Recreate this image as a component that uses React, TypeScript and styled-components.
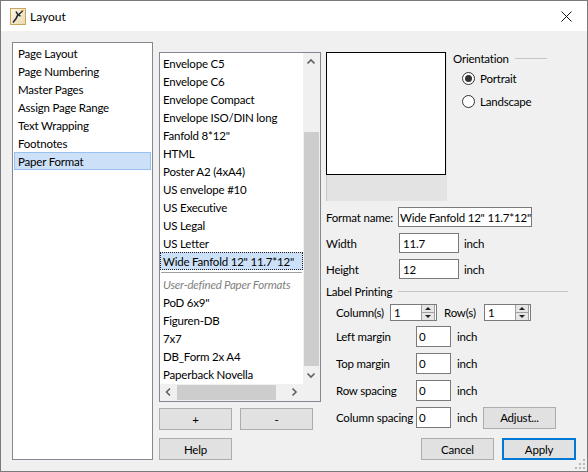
import React from 'react';
import styled, { createGlobalStyle } from 'styled-components';

const FONT = `"Lato", "Liberation Sans", sans-serif`;

const Global = createGlobalStyle`
  html, body { margin: 0; padding: 0; background: #ffffff; }
  body { font-family: ${FONT}; font-size: 11.5px; letter-spacing: -0.2px; color: #000; }
  * { box-sizing: border-box; }
`;

const Window = styled.div`
  position: relative;
  width: 588px;
  height: 472px;
  border: 1px solid #7a7a7a;
  background: #f0f0f0;
  display: flex;
  flex-direction: column;
  overflow: hidden;
`;

const TitleBar = styled.div`
  flex: none;
  height: 30px;
  background: #ffffff;
  display: flex;
  align-items: center;
  padding-left: 9px;
  gap: 4px;
`;

const TitleText = styled.span`
  flex: 1;
  font-size: 12px;
  letter-spacing: 0;
  padding-top: 1px;
`;

const CloseBox = styled.div`
  width: 46px;
  height: 30px;
  display: flex;
  align-items: center;
  justify-content: center;
  margin-right: -2px;
`;

const Body = styled.div`
  flex: 1;
  display: flex;
  gap: 6px;
  padding: 11px 11px 11px 11px;
  min-height: 0;
`;

const Box = styled.div`
  background: #ffffff;
  border: 1px solid #828790;
`;

const NavList = styled(Box)`
  flex: none;
  width: 141px;
  padding: 1px;
  display: flex;
  flex-direction: column;
`;

const Item = styled.div<{ $selected?: boolean; $focus?: boolean; $muted?: boolean; $pad: number }>`
  flex: none;
  height: 18px;
  line-height: 16px;
  padding-top: 1px;
  padding-left: ${(p) => p.$pad}px;
  white-space: nowrap;
  border: 1px ${(p) => (p.$focus ? 'dotted' : 'solid')}
    ${(p) => (p.$focus ? '#222' : p.$selected ? '#99c1ef' : 'transparent')};
  background: ${(p) => (p.$selected ? '#cce0f8' : 'transparent')};
  color: ${(p) => (p.$muted ? '#7f7f7f' : '#000')};
  font-style: ${(p) => (p.$muted ? 'italic' : 'normal')};
`;

const Separator = styled.div`
  flex: none;
  height: 5px;
  display: flex;
  align-items: center;
  padding: 0 1px;
  &::after {
    content: '';
    flex: 1;
    height: 1px;
    background: #a0a0a0;
  }
`;

const RightPane = styled.div`
  flex: 1;
  display: flex;
  flex-direction: column;
  padding-top: 10px;
`;

const Main = styled.div`
  flex: 1;
  display: flex;
  gap: 5px;
`;

const MiddleCol = styled.div`
  flex: none;
  width: 162px;
  display: flex;
  flex-direction: column;
  gap: 6px;
`;

const FormatList = styled(Box)`
  height: 350px;
  display: grid;
  grid-template-columns: 1fr 17px;
  grid-template-rows: 1fr 17px;
  overflow: hidden;
`;

const ListContent = styled.div`
  padding-top: 1px;
  display: flex;
  flex-direction: column;
  overflow: hidden;
`;

const VScroll = styled.div`
  background: #f0f0f0;
  display: flex;
  flex-direction: column;
`;

const HScroll = styled.div`
  background: #f0f0f0;
  display: flex;
`;

const Corner = styled.div`
  background: #f0f0f0;
`;

const ArrowBtn = styled.div`
  flex: none;
  width: 17px;
  height: 17px;
  display: flex;
  align-items: center;
  justify-content: center;
`;

const VTrack = styled.div`
  flex: 1;
  padding: 0 1px;
`;

const HTrack = styled.div`
  flex: 1;
  padding: 1px 0;
`;

const VThumb = styled.div<{ $offset: number; $size: number }>`
  margin-top: ${(p) => p.$offset}px;
  height: ${(p) => p.$size}px;
  background: #cdcdcd;
`;

const HThumb = styled.div<{ $offset: number; $size: number }>`
  margin-left: ${(p) => p.$offset}px;
  width: ${(p) => p.$size}px;
  height: 100%;
  background: #cdcdcd;
`;

const ButtonRow = styled.div`
  display: flex;
  gap: 8px;
`;

const Button = styled.div<{ $w?: number; $default?: boolean }>`
  flex: none;
  width: ${(p) => p.$w ?? 73}px;
  height: 22px;
  background: #e1e1e1;
  border: ${(p) => (p.$default ? '2px solid #0078d7' : '1px solid #adadad')};
  display: flex;
  align-items: center;
  justify-content: center;
  white-space: nowrap;
`;

const FormCol = styled.div`
  flex: 1;
  display: flex;
  flex-direction: column;
`;

const TopRow = styled.div`
  flex: none;
  height: 149px;
  display: flex;
`;

const Preview = styled.div`
  flex: none;
  width: 121px;
  height: 149px;
  background: #e3e3e3;
  border-left: 1px solid #c8c8c8;
`;

const PreviewPage = styled.div`
  width: 120px;
  height: 123px;
  margin-left: -1px;
  background: #ffffff;
  border: 1px solid #000000;
`;

const OrientGroup = styled.div`
  flex: none;
  width: 94px;
  margin-left: 6px;
  display: flex;
  flex-direction: column;
`;

const GroupHeader = styled.div<{ $mt?: number; $mr?: number }>`
  flex: none;
  height: 13px;
  margin-top: ${(p) => p.$mt ?? 0}px;
  margin-right: ${(p) => p.$mr ?? 0}px;
  display: flex;
  align-items: center;
  white-space: nowrap;
  &::after {
    content: '';
    flex: 1;
    height: 1px;
    margin-left: 6px;
    background: #c4c4c4;
  }
`;

const RadioRow = styled.div<{ $mt: number }>`
  height: 18px;
  margin-top: ${(p) => p.$mt}px;
  padding-left: 9px;
  display: flex;
  align-items: center;
  gap: 5px;
`;

const RadioCircle = styled.span<{ $on?: boolean }>`
  flex: none;
  width: 13px;
  height: 13px;
  border-radius: 50%;
  border: 1px solid #333333;
  background: #ffffff;
  display: flex;
  align-items: center;
  justify-content: center;
  &::after {
    content: '';
    width: 7px;
    height: 7px;
    border-radius: 50%;
    background: ${(p) => (p.$on ? '#333333' : 'transparent')};
  }
`;

const Row = styled.div<{ $mt?: number; $h: number; $indent?: number }>`
  flex: none;
  height: ${(p) => p.$h}px;
  margin-top: ${(p) => p.$mt ?? 0}px;
  padding-left: ${(p) => p.$indent ?? 0}px;
  display: flex;
  align-items: center;
`;

const Label = styled.span<{ $w: number }>`
  flex: none;
  width: ${(p) => p.$w}px;
  white-space: nowrap;
`;

const Field = styled.div<{ $w: number; $pad: number }>`
  flex: none;
  width: ${(p) => p.$w}px;
  height: 100%;
  background: #ffffff;
  border: 1px solid #7a7a7a;
  padding-left: ${(p) => p.$pad}px;
  display: flex;
  align-items: center;
  white-space: nowrap;
  overflow: hidden;
`;

const Unit = styled.span<{ $ml: number; $w?: number }>`
  flex: none;
  margin-left: ${(p) => p.$ml}px;
  width: ${(p) => (p.$w ? `${p.$w}px` : 'auto')};
`;

const Spin = styled.div`
  flex: none;
  width: 47px;
  height: 100%;
  background: #ffffff;
  border: 1px solid #7a7a7a;
  display: flex;
  align-items: stretch;
`;

const SpinValue = styled.span`
  flex: 1;
  padding-left: 3px;
  display: flex;
  align-items: center;
`;

const SpinButtons = styled.div`
  flex: none;
  width: 14px;
  margin: 0 1px 0 0;
  border-left: 1px solid #a0a0a0;
  border-right: 1px solid #a0a0a0;
  background: #e6e6e6;
  display: flex;
  flex-direction: column;
`;

const SpinHalf = styled.div<{ $down?: boolean }>`
  flex: 1;
  display: flex;
  align-items: center;
  justify-content: center;
  border-top: ${(p) => (p.$down ? '1px solid #a0a0a0' : 'none')};
  &::after {
    content: '';
    width: 0;
    height: 0;
    border-left: 3px solid transparent;
    border-right: 3px solid transparent;
    ${(p) => (p.$down ? 'border-top: 3px solid #222;' : 'border-bottom: 3px solid #222;')}
  }
`;

const Gap = styled.span<{ $w: number }>`
  flex: none;
  width: ${(p) => p.$w}px;
`;

const BottomBar = styled.div`
  flex: none;
  margin-top: 8px;
  display: flex;
  gap: 8px;
`;

const Spacer = styled.div`
  flex: 1;
`;

const Grip = styled.svg`
  position: absolute;
  right: 1px;
  bottom: 1px;
`;

const Chevron = ({ dir }: { dir: 'up' | 'down' | 'left' | 'right' }) => {
  const pts = {
    up: '4.5,10.5 8,7 11.5,10.5',
    down: '4.5,6.5 8,10 11.5,6.5',
    left: '10,4.5 6.5,8 10,11.5',
    right: '6.5,4.5 10,8 6.5,11.5',
  }[dir];
  return (
    <svg width="17" height="17" viewBox="0 0 17 17">
      <polyline points={pts} fill="none" stroke="#606060" strokeWidth="1.6" />
    </svg>
  );
};

const AppIcon = () => (
  <svg width="16" height="17" viewBox="0 0 16 17">
    <defs>
      <linearGradient id="ig" x1="0" y1="0" x2="1" y2="1">
        <stop offset="0" stopColor="#fdf8ea" />
        <stop offset="1" stopColor="#ead9ad" />
      </linearGradient>
    </defs>
    <rect x="0.5" y="0.5" width="15" height="16" fill="url(#ig)" stroke="#c9a65e" />
    <path d="M3 14.5 C5.5 12 7 9.5 8 6.5" fill="none" stroke="#1e2630" strokeWidth="1.6" />
    <path d="M6 3.5 C7 6 8.5 7.5 10.5 8" fill="none" stroke="#1e2630" strokeWidth="1.4" />
    <path d="M8 7 C10 5.5 11.5 4 13 2.5" fill="none" stroke="#1e2630" strokeWidth="1.3" />
    <path d="M11 3 L13.5 2.2" fill="none" stroke="#e08a2a" strokeWidth="1" />
  </svg>
);

const navItems = [
  'Page Layout',
  'Page Numbering',
  'Master Pages',
  'Assign Page Range',
  'Text Wrapping',
  'Footnotes',
  'Paper Format',
];

const builtinFormats = [
  'Envelope C5',
  'Envelope C6',
  'Envelope Compact',
  'Envelope ISO/DIN long',
  'Fanfold 8*12"',
  'HTML',
  'Poster A2 (4xA4)',
  'US envelope #10',
  'US Executive',
  'US Legal',
  'US Letter',
  'Wide Fanfold 12" 11.7*12"',
];

const userFormats = ['PoD 6x9"', 'Figuren-DB', '7x7', 'DB_Form 2x A4', 'Paperback Novella'];

const marginRows = ['Left margin', 'Top margin', 'Row spacing', 'Column spacing'];

export default function App() {
  return (
    <>
      <Global />
      <Window>
        <TitleBar>
          <AppIcon />
          <TitleText>Layout</TitleText>
          <CloseBox>
            <svg width="11" height="11" viewBox="0 0 11 11">
              <path d="M0.5 0.5 L10.5 10.5 M10.5 0.5 L0.5 10.5" stroke="#111" strokeWidth="1" />
            </svg>
          </CloseBox>
        </TitleBar>
        <Body>
          <NavList>
            {navItems.map((t) => (
              <Item key={t} $pad={3} $selected={t === 'Paper Format'}>
                {t}
              </Item>
            ))}
          </NavList>
          <RightPane>
            <Main>
              <MiddleCol>
                <FormatList>
                  <ListContent>
                    {builtinFormats.map((t) => (
                      <Item
                        key={t}
                        $pad={2}
                        $selected={t.startsWith('Wide')}
                        $focus={t.startsWith('Wide')}
                      >
                        {t}
                      </Item>
                    ))}
                    <Separator />
                    <Item $pad={2} $muted>
                      User-defined Paper Formats
                    </Item>
                    {userFormats.map((t) => (
                      <Item key={t} $pad={2}>
                        {t}
                      </Item>
                    ))}
                  </ListContent>
                  <VScroll>
                    <ArrowBtn>
                      <Chevron dir="up" />
                    </ArrowBtn>
                    <VTrack>
                      <VThumb $offset={62} $size={234} />
                    </VTrack>
                    <ArrowBtn>
                      <Chevron dir="down" />
                    </ArrowBtn>
                  </VScroll>
                  <HScroll>
                    <ArrowBtn>
                      <Chevron dir="left" />
                    </ArrowBtn>
                    <HTrack>
                      <HThumb $offset={0} $size={99} />
                    </HTrack>
                    <ArrowBtn>
                      <Chevron dir="right" />
                    </ArrowBtn>
                  </HScroll>
                  <Corner />
                </FormatList>
                <ButtonRow>
                  <Button>+</Button>
                  <Button>-</Button>
                </ButtonRow>
              </MiddleCol>
              <FormCol>
                <TopRow>
                  <Preview>
                    <PreviewPage />
                  </Preview>
                  <OrientGroup>
                    <GroupHeader>Orientation</GroupHeader>
                    <RadioRow $mt={4}>
                      <RadioCircle $on />
                      Portrait
                    </RadioRow>
                    <RadioRow $mt={5}>
                      <RadioCircle />
                      Landscape
                    </RadioRow>
                  </OrientGroup>
                </TopRow>
                <Row $mt={6} $h={20}>
                  <Label $w={72}>Format name:</Label>
                  <Field $w={134} $pad={1}>
                    Wide Fanfold 12" 11.7*12"
                  </Field>
                </Row>
                <Row $mt={6} $h={20}>
                  <Label $w={73}>Width</Label>
                  <Field $w={60} $pad={3}>
                    11.7
                  </Field>
                  <Unit $ml={5}>inch</Unit>
                </Row>
                <Row $mt={6} $h={20}>
                  <Label $w={73}>Height</Label>
                  <Field $w={60} $pad={3}>
                    12
                  </Field>
                  <Unit $ml={5}>inch</Unit>
                </Row>
                <GroupHeader $mt={6} $mr={8}>
                  Label Printing
                </GroupHeader>
                <Row $mt={6} $h={17} $indent={10}>
                  <Label $w={54}>Column(s)</Label>
                  <Spin>
                    <SpinValue>1</SpinValue>
                    <SpinButtons>
                      <SpinHalf />
                      <SpinHalf $down />
                    </SpinButtons>
                  </Spin>
                  <Gap $w={7} />
                  <Label $w={40}>Row(s)</Label>
                  <Spin>
                    <SpinValue>1</SpinValue>
                    <SpinButtons>
                      <SpinHalf />
                      <SpinHalf $down />
                    </SpinButtons>
                  </Spin>
                </Row>
                {marginRows.map((t, i) => (
                  <Row key={t} $mt={i === 0 ? 5 : 6} $h={21} $indent={10}>
                    <Label $w={80}>{t}</Label>
                    <Field $w={35} $pad={2}>
                      0
                    </Field>
                    <Unit $ml={6} $w={26}>
                      inch
                    </Unit>
                    {t === 'Column spacing' && <Button>Adjust...</Button>}
                  </Row>
                ))}
              </FormCol>
            </Main>
            <BottomBar>
              <Button>Help</Button>
              <Spacer />
              <Button>Cancel</Button>
              <Button $w={74} $default>
                Apply
              </Button>
            </BottomBar>
          </RightPane>
        </Body>
        <Grip width="12" height="12" viewBox="0 0 12 12">
          {[
            [9, 1],
            [5, 5],
            [9, 5],
            [1, 9],
            [5, 9],
            [9, 9],
          ].map(([x, y]) => (
            <rect key={`${x}-${y}`} x={x} y={y} width="2" height="2" fill="#b8b8b8" />
          ))}
        </Grip>
      </Window>
    </>
  );
}
